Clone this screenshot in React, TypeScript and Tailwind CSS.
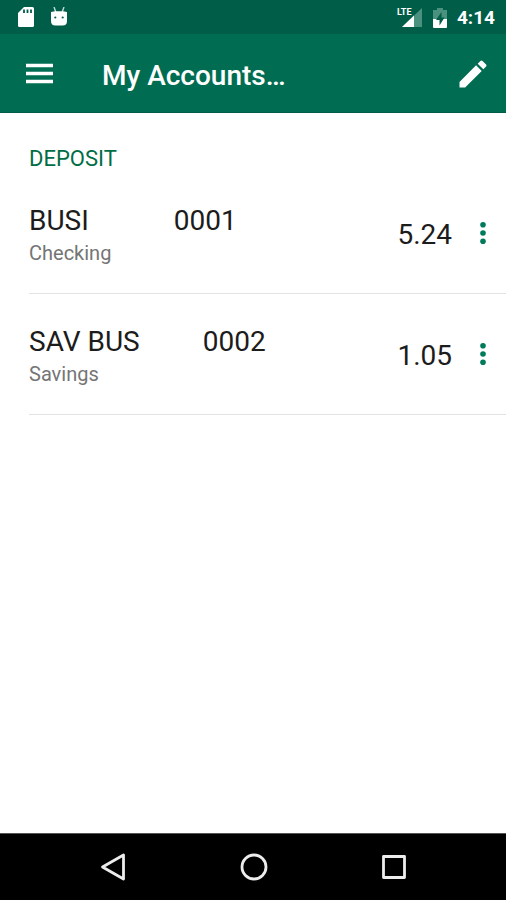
import React from "react";

type Account = {
  name: string;
  number: string;
  kind: string;
  balance: string;
  gap: string;
};

const accounts: Account[] = [
  { name: "BUSI", number: "0001", kind: "Checking", balance: "5.24", gap: "gap-[85px]" },
  { name: "SAV BUS", number: "0002", kind: "Savings", balance: "1.05", gap: "gap-[63px]" },
];

function StatusBar() {
  return (
    <div className="flex h-[34px] items-center justify-between bg-[#005d48] pr-[11px] pl-[18px] text-white">
      <div className="flex items-center gap-4">
        <svg className="h-5 w-4" viewBox="0 0 16 20" aria-hidden="true">
          <path d="M6 0h8.500a1.500 1.500 0 0 1 1.500 1.500v17a1.500 1.500 0 0 1-1.500 1.500h-13A1.500 1.500 0 0 1 0 18.500V6z" fill="#fff" />
          <path d="M6 2.500v3.500M9.500 2.500v3.500M13 2.500v3.500" stroke="#005d48" strokeWidth="1.800" />
        </svg>
        <svg className="h-5 w-[18px]" viewBox="0 0 18 20" aria-hidden="true">
          <path d="M4 0l1.800 5M14 0l-1.800 5" stroke="#c5dcd6" strokeWidth="1.400" />
          <path d="M1 5l4-.8h8l4 .8V14q0 4.500-4.500 4.500h-7Q1 18.500 1 14z" fill="#fff" />
          <circle cx="5.300" cy="10.500" r="1.100" fill="#005d48" />
          <circle cx="12.700" cy="10.500" r="1.100" fill="#005d48" />
        </svg>
      </div>
      <div className="flex items-center pt-0.5">
        <svg className="h-[22px] w-[26px]" viewBox="0 0 26 22" aria-hidden="true">
          <path d="M25 1v19H5z" fill="#4b917f" />
          <path d="M17 8.600V20H5z" fill="#fff" />
          <text x="0" y="8" fill="#fff" fontFamily="Roboto, sans-serif" fontSize="9" fontWeight="700" stroke="#005d48" strokeWidth="2" paintOrder="stroke">
            LTE
          </text>
        </svg>
        <svg className="ml-[10px] h-5 w-[14px]" viewBox="0 0 14 20" aria-hidden="true">
          <path d="M4 0h6v2h4v9H0V2h4z" fill="#4b917f" />
          <path d="M0 11h14v8a1 1 0 0 1-1 1H1a1 1 0 0 1-1-1z" fill="#fff" />
          <path d="M8.500 4L3 12h3.500v5.500L11.500 9.500H8.500z" fill="#005d48" />
        </svg>
        <span className="ml-[10px] text-[19px] leading-6 font-bold">4:14</span>
      </div>
    </div>
  );
}

function AppBar() {
  return (
    <header className="flex h-[79px] items-center border-b border-[#005d48] bg-[#006d52] pt-0.5 pr-[15px] pl-[26px] text-white">
      <button type="button" aria-label="Menu" className="shrink-0">
        <svg className="h-[22px] w-[27px]" viewBox="0 0 27 22" aria-hidden="true">
          <path d="M0 2.500h27M0 10.500h27M0 18.500h27" stroke="#fff" strokeWidth="3.400" />
        </svg>
      </button>
      <h1 className="ml-[49px] min-w-0 flex-1 truncate pt-1 text-[28px] leading-9 font-medium">My Accounts…</h1>
      <button type="button" aria-label="Edit accounts" className="shrink-0">
        <svg className="size-9" viewBox="0 0 24 24" fill="#fff" aria-hidden="true">
          <path d="M3 17.250V21h3.750L17.810 9.940l-3.750-3.750L3 17.250zM20.710 7.040a1 1 0 0 0 0-1.410l-2.340-2.340a1 1 0 0 0-1.410 0l-1.830 1.830 3.750 3.750 1.830-1.830z" />
        </svg>
      </button>
    </header>
  );
}

function AccountRow({ account }: { account: Account }) {
  return (
    <li className="ml-[29px] flex items-center border-b border-[#e3e3e3] pt-[30px] pr-3 pb-[26px]">
      <div className="min-w-0 flex-1">
        <div className={`flex text-[28px] leading-9 text-[#1c1c1c] ${account.gap}`}>
          <span className="whitespace-nowrap">{account.name}</span>
          <span>{account.number}</span>
        </div>
        <div className="text-xl leading-7 text-[#757575]">{account.kind}</div>
      </div>
      <span className="text-[28px] leading-9 text-[#1c1c1c]">{account.balance}</span>
      <button type="button" aria-label={`Options for ${account.name}`} className="ml-5 flex w-[22px] justify-center">
        <svg className="h-[26px] w-[6px]" viewBox="0 0 6 26" fill="#007a5a" aria-hidden="true">
          <circle cx="3" cy="2.800" r="2.800" />
          <circle cx="3" cy="11" r="2.800" />
          <circle cx="3" cy="19.200" r="2.800" />
        </svg>
      </button>
    </li>
  );
}

function NavigationBar() {
  return (
    <nav className="flex h-[67px] items-center justify-center gap-[112px] border-t border-[#555] bg-black pl-0.5" aria-label="System">
      <button type="button" aria-label="Back">
        <svg className="size-7" viewBox="0 0 28 28" fill="none" stroke="#ededed" strokeWidth="2.800" strokeLinejoin="round" aria-hidden="true">
          <path d="M23.500 2v24L2.500 14z" />
        </svg>
      </button>
      <button type="button" aria-label="Home">
        <svg className="size-7" viewBox="0 0 28 28" fill="none" stroke="#ededed" strokeWidth="2.800" aria-hidden="true">
          <circle cx="14" cy="14" r="12" />
        </svg>
      </button>
      <button type="button" aria-label="Overview">
        <svg className="size-7" viewBox="0 0 28 28" fill="none" stroke="#ededed" strokeWidth="2.800" strokeLinejoin="round" aria-hidden="true">
          <path d="M3.500 3.500h21v21h-21z" />
        </svg>
      </button>
    </nav>
  );
}

export default function App() {
  return (
    <div className="flex min-h-screen flex-col bg-white font-[Roboto,sans-serif]">
      <StatusBar />
      <AppBar />
      <main className="flex-1">
        <h2 className="pt-8 pl-[29px] text-[22px] leading-7 text-[#006d46]">DEPOSIT</h2>
        <ul>
          {accounts.map((account) => (
            <AccountRow key={account.number} account={account} />
          ))}
        </ul>
      </main>
      <NavigationBar />
    </div>
  );
}
